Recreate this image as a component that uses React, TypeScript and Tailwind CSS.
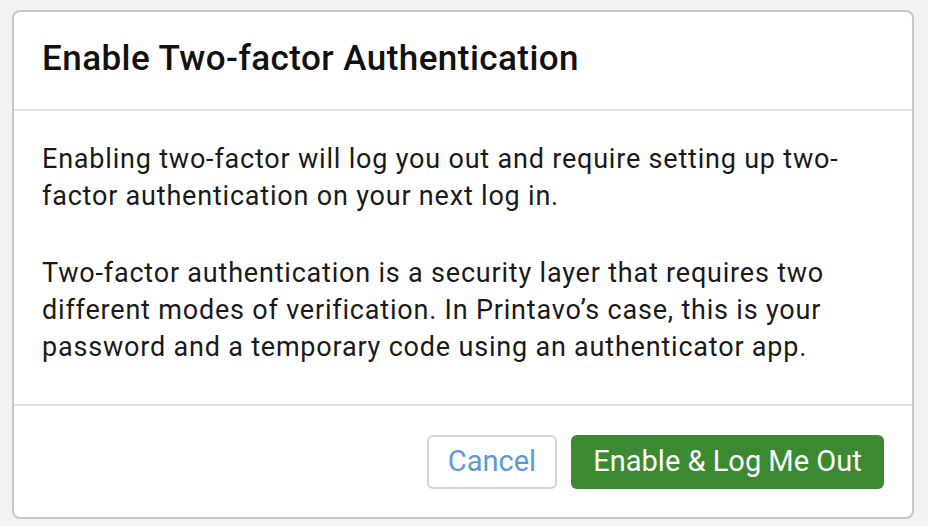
import React from 'react';

const App: React.FC = () => {
  return (
    <div className="w-[928px] h-[526px] bg-[#f3f3f3] pt-[10px] pl-[12px] font-['Roboto',sans-serif]">
      <div className="w-[902px] h-[509px] bg-white border-2 border-[#c9c9c9] rounded-[8px] flex flex-col">
        <div className="h-[99px] flex items-center px-[28px] pb-[3px] border-b-2 border-[#dfe3e6]">
          <h2 className="text-[35px] font-medium tracking-[0.45px] text-[#111]">Enable Two-factor Authentication</h2>
        </div>
        <div className="flex-1 px-[28px] pt-[30px] text-[27px] leading-[37px] tracking-[0.8px] text-[#1a1a1a]">
          <p className="mb-[40px]">
            Enabling two-factor will log you out and require setting up two-factor authentication on your next log in.
          </p>
          <p>
            Two-factor authentication is a security layer that requires two different modes of verification. In Printavo’s case, this is your password and a temporary code using an authenticator app.
          </p>
        </div>
        <div className="h-[113px] border-t-2 border-[#dfe3e6] flex items-center justify-end gap-[14px] px-[28px]">
          <button className="h-[54px] w-[130px] rounded-[6px] border-2 border-[#d0d5d9] bg-white text-[29px] text-[#5b9bd5]">
            Cancel
          </button>
          <button className="h-[54px] w-[313px] rounded-[6px] bg-[#3b8a32] text-[29px] text-white">
            Enable &amp; Log Me Out
          </button>
        </div>
      </div>
    </div>
  );
};

export default App;
